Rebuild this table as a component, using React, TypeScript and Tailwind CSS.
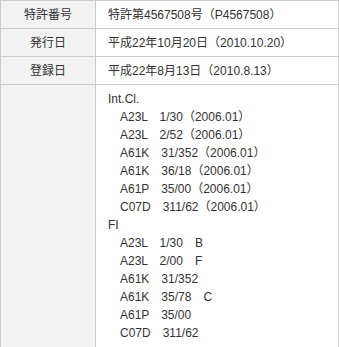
import React from "react";

const th = "border border-[#cccccc] bg-[#f2f2f2] w-[95px] text-center font-normal align-middle";
const td = "border border-[#cccccc] bg-white text-left pl-3 align-middle";

const lines = [
  "Int.Cl.",
  "\u3000A23L\u30001/30（2006.01）",
  "\u3000A23L\u30002/52（2006.01）",
  "\u3000A61K\u300031/352（2006.01）",
  "\u3000A61K\u300036/18（2006.01）",
  "\u3000A61P\u300035/00（2006.01）",
  "\u3000C07D\u3000311/62（2006.01）",
  "FI",
  "\u3000A23L\u30001/30\u3000B",
  "\u3000A23L\u30002/00\u3000F",
  "\u3000A61K\u300031/352",
  "\u3000A61K\u300035/78\u3000C",
  "\u3000A61P\u300035/00",
  "\u3000C07D\u3000311/62",
];

export default function App() {
  return (
    <div
      className="w-[339px] h-[347px] bg-white text-[#333333] text-[12px]"
      style={{ fontFamily: '"Liberation Sans", "Noto Sans CJK JP", sans-serif' }}
    >
      <table className="w-[339px] border-collapse">
        <tbody>
          <tr className="h-[28px]">
            <th className={th}>特許番号</th>
            <td className={td}>特許第4567508号（P4567508）</td>
          </tr>
          <tr className="h-[28px]">
            <th className={th}>発行日</th>
            <td className={td}>平成22年10月20日（2010.10.20）</td>
          </tr>
          <tr className="h-[28px]">
            <th className={th}>登録日</th>
            <td className={td}>平成22年8月13日（2010.8.13）</td>
          </tr>
          <tr>
            <th className={th}></th>
            <td className={td + " pt-[5px] pb-[5px]"}>
              {lines.map((l, i) => (
                <div key={i} className="leading-[18px] whitespace-pre">
                  {l}
                </div>
              ))}
            </td>
          </tr>
        </tbody>
      </table>
    </div>
  );
}
